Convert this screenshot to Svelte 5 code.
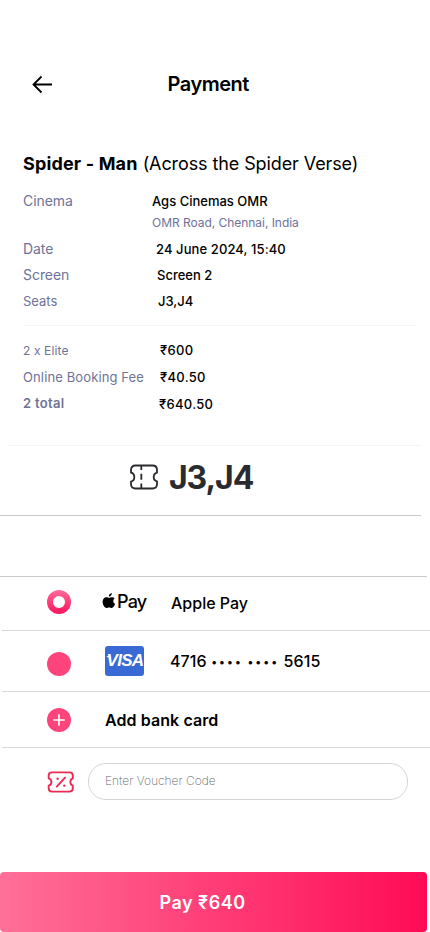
<script>
	let voucher = $state('');

	const details = [
		{ label: 'Cinema', value: 'Ags Cinemas OMR', name: 'cinema' },
		{ label: '', value: 'OMR Road, Chennai, India', name: 'address' },
		{ label: 'Date', value: '24 June 2024, 15:40', name: 'date' },
		{ label: 'Screen', value: 'Screen 2', name: 'screen' },
		{ label: 'Seats', value: 'J3,J4', name: 'seats' }
	];

	const prices = [
		{ label: '2 x Elite', value: '₹600', name: 'elite' },
		{ label: 'Online Booking Fee', value: '₹40.50', name: 'fee' },
		{ label: '2 total', value: '₹640.50', name: 'total' }
	];
</script>

<main>
	<header>
		<button class="back" aria-label="Back">
			<svg width="22" height="20" viewBox="0 0 22 20" fill="none" stroke="#000" stroke-width="1.8">
				<path d="M21 10.5H3M10.5 2.5L2.5 10.5L10.5 18.5" />
			</svg>
		</button>
		<h1>Payment</h1>
	</header>

	<h2><b>Spider - Man</b> <span>(Across the Spider Verse)</span></h2>

	<dl class="details">
		{#each details as row}
			<div class="row {row.name}">
				<dt>{row.label}</dt>
				<dd>{row.value}</dd>
			</div>
		{/each}
	</dl>

	<dl class="prices">
		{#each prices as row}
			<div class="row {row.name}">
				<dt>{row.label}</dt>
				<dd>{row.value}</dd>
			</div>
		{/each}
	</dl>

	<section class="ticket">
		<svg width="30" height="26" viewBox="0 0 30 26" fill="none" stroke="#2a2b2e" stroke-width="1.8">
			<path d="M6.5 1.5H23.5Q28 1.5 28 6V8.6C23.6 9.6 23.6 16.4 28 17.4V20Q28 24.5 23.5 24.5H6.5Q2 24.5 2 20V17.6C6.4 16.8 6.4 9.4 2 8.6V6Q2 1.5 6.5 1.5Z" />
			<path d="M12.3 2V6M12.3 9.8V15.8M12.3 19.6V24" />
		</svg>
		<strong>J3,J4</strong>
	</section>

	<section class="methods">
		<div class="method apple">
			<span class="radio selected"></span>
			<span class="brand apple-logo">
				<svg width="14" height="16" viewBox="0 0 14 16" fill="#000">
					<path d="M9.9 0C10 1.8 8.6 3.7 6.8 3.7C6.6 2 8.1 .3 9.9 0Z" />
					<path d="M12.7 5.4C10.6 6.7 10.9 9.8 13.2 10.8C12.5 12.7 11.1 15 9.8 15C8.8 15 8.4 14.4 7.2 14.4C5.9 14.4 5.4 15 4.5 15C2.4 15 .6 11.5 .6 8.8C.6 6 2.3 4.2 4.3 4.2C5.5 4.2 6.4 4.9 7.1 4.9C7.8 4.9 8.9 4.1 10.2 4.2C11.2 4.2 12.1 4.6 12.7 5.4Z" />
				</svg>
				<span>Pay</span>
			</span>
			<span class="name">Apple Pay</span>
		</div>
		<div class="method card">
			<span class="radio"></span>
			<span class="brand visa"><span>VISA</span></span>
			<span class="name">4716 <span class="dots">••••</span> <span class="dots">••••</span> 5615</span>
		</div>
		<div class="method add">
			<span class="radio">
				<svg width="24" height="24" viewBox="0 0 24 24" stroke="#fff" stroke-width="1.7">
					<path d="M12 6.2V17.8M6.2 12H17.8" />
				</svg>
			</span>
			<span class="name">Add bank card</span>
		</div>
	</section>

	<section class="voucher">
		<svg width="28" height="22" viewBox="0 0 28 22" fill="none" stroke="#ea2c55" stroke-width="1.9" stroke-linejoin="round">
			<path d="M5 1.4H22.5Q25.8 1.4 25.8 4.5V7.4C22.6 8.4 22.6 13.6 25.8 14.6V17.5Q25.8 20.6 22.5 20.6H5Q1.7 20.6 1.7 17.5V14.6C5.4 13.6 5.4 8.4 1.7 7.4V4.5Q1.7 1.4 5 1.4Z" />
			<path d="M18 6.6L9.8 15.6" stroke-linecap="round" />
			<circle cx="10.6" cy="7.8" r="1.2" fill="#ea2c55" stroke="none" />
			<circle cx="17.3" cy="14.6" r="1.2" fill="#ea2c55" stroke="none" />
		</svg>
		<input type="text" placeholder="Enter Voucher Code" bind:value={voucher} />
	</section>

	<button class="pay">Pay ₹640</button>
</main>

<style>
	:global(body) {
		background: #fff;
	}

	main {
		box-sizing: border-box;
		width: 430px;
		height: 932px;
		overflow: hidden;
		display: flex;
		flex-direction: column;
		font-family: Inter, "Liberation Sans", sans-serif;
		font-feature-settings: "calt" 0;
		color: #000;
	}

	h1, h2, dl, dd {
		margin: 0;
	}

	button {
		border: 0;
		padding: 0;
		font-family: inherit;
	}

	header {
		display: flex;
		align-items: center;
		height: 40px;
		padding: 64px 0 40px 31px;
	}

	.back {
		display: flex;
		width: 22px;
		background: none;
	}

	h1 {
		margin-left: 114.5px;
		font-size: 20px;
		font-weight: 600;
		line-height: 28px;
		letter-spacing: -0.5px;
	}

	h2 {
		height: 44px;
		box-sizing: border-box;
		padding: 8px 0 0 23px;
		font-size: 18px;
		font-weight: 400;
		line-height: 24px;
		white-space: nowrap;
	}

	h2 b {
		font-weight: 700;
		letter-spacing: 0.15px;
	}

	h2 span {
		letter-spacing: -0.1px;
	}

	.row {
		display: flex;
		align-items: center;
		height: 26px;
		font-size: 13px;
		white-space: nowrap;
	}

	dt {
		width: 129px;
		color: #6e7397;
		letter-spacing: 0.12px;
	}

	dd {
		font-weight: 500;
	}

	.details {
		height: 138px;
		box-sizing: border-box;
		margin: 0 14px 0 23px;
		border-bottom: 1px solid #f3f4f5;
	}

	.details .cinema {
		height: 26px;
	}

	.details .address {
		height: 16px;
		margin-bottom: 6px;
	}

	.address dd {
		color: #6e7397;
		font-size: 12px;
		font-weight: 400;
		letter-spacing: -0.04px;
	}

	.cinema dt, .date dt, .screen dt {
		padding-bottom: 1px;
		font-size: 14px;
		letter-spacing: -0.05px;
	}

	.seats dt {
		letter-spacing: 0;
	}

	.date dd {
		padding-left: 4px;
		letter-spacing: 0.1px;
	}

	.screen dd {
		padding-left: 5px;
	}

	.seats dd {
		padding-left: 6px;
	}

	.prices {
		height: 120px;
		box-sizing: border-box;
		margin: 0 9px 0 8px;
		padding: 10px 0 0 15px;
		border-bottom: 1px solid #f3f4f5;
	}

	.prices .row {
		height: 27px;
	}

	.prices dt {
		width: 137px;
	}

	.prices dd {
		letter-spacing: 0.3px;
	}

	.elite dt {
		padding-top: 1px;
		font-size: 12px;
	}

	.total dt {
		padding-bottom: 2px;
		font-weight: 600;
		letter-spacing: 0.3px;
	}

	.prices .total dd {
		margin-left: -1px;
	}

	.ticket {
		display: flex;
		align-items: center;
		gap: 10px;
		height: 70px;
		box-sizing: border-box;
		width: 421px;
		padding: 0 0 7px 129px;
		border-bottom: 1px solid #c9cacb;
	}

	.ticket strong {
		color: #2a2b2e;
		font-size: 32px;
		font-weight: 700;
		letter-spacing: -1.1px;
	}

	.methods {
		margin-top: 60px;
	}

	.methods::before {
		content: "";
		display: block;
		width: 427px;
		height: 1px;
		background: #c9cacb;
	}

	.method {
		display: flex;
		align-items: center;
		box-sizing: border-box;
		margin-left: 2px;
		padding-left: 45px;
		border-bottom: 1px solid #d9dadb;
		font-size: 16px;
		font-weight: 500;
		white-space: nowrap;
	}

	.apple {
		height: 54px;
	}

	.apple .name {
		margin-bottom: 1px;
	}

	.card {
		height: 61px;
	}

	.card .name {
		letter-spacing: 0.1px;
	}

	.add {
		height: 56px;
	}

	.radio {
		display: flex;
		width: 24px;
		height: 24px;
		border-radius: 50%;
		background: #ff437b;
	}

	.selected {
		margin-bottom: 4px;
		align-items: center;
		justify-content: center;
		background: linear-gradient(#ff6a98, #f9155d);
	}

	.selected::after {
		content: "";
		width: 12px;
		height: 12px;
		border-radius: 50%;
		background: #fff;
	}

	.apple-logo {
		display: flex;
		align-items: center;
		width: 70px;
		margin: 0 0 5px 30px;
	}

	.apple-logo svg {
		margin: 0 0 1px 0.5px;
	}

	.apple-logo span {
		margin-left: 1.5px;
		font-size: 18px;
		font-weight: 450;
		letter-spacing: -0.8px;
	}

	.card .radio {
		margin-top: 5px;
	}

	.dots {
		font-size: 11px;
		letter-spacing: 2.1px;
		vertical-align: 1px;
	}

	.visa {
		display: flex;
		align-items: center;
		justify-content: center;
		width: 39px;
		height: 30px;
		margin: 0 26px 0 34px;
		border-radius: 3px;
		background: #3869d4;
		color: #fff;
		font-family: "Liberation Sans", sans-serif;
		font-size: 17px;
		font-style: italic;
		font-weight: 700;
		letter-spacing: -0.7px;
	}

	/* flag on the left arm of the V */
	.visa::before {
		content: "";
		width: 5px;
		height: 4px;
		margin: -7px -4px 0 0;
		background: #fff;
		clip-path: polygon(0 0, 100% 0, 100% 100%);
	}

	.add .name {
		margin-left: 34px;
		font-weight: 600;
		letter-spacing: 0.08px;
	}

	.voucher {
		display: flex;
		align-items: center;
		margin-top: 15px;
		padding-left: 47px;
	}

	input {
		box-sizing: border-box;
		width: 320px;
		height: 37px;
		margin-left: 13px;
		padding: 0 16px 2px;
		border: 1px solid #d3d4d6;
		border-radius: 18px;
		background: none;
		font-family: inherit;
		font-size: 12px;
	}

	input::placeholder {
		color: #666;
		font-weight: 200;
		opacity: 1;
	}

	.pay {
		width: 427px;
		height: 60px;
		margin-top: auto;
		padding-right: 22px;
		border-radius: 4px;
		background: linear-gradient(90deg, #ff7098, #ff3d76 50%, #ff0b55);
		color: #fff;
		font-size: 18px;
		font-weight: 600;
		letter-spacing: 0.5px;
	}
</style>
